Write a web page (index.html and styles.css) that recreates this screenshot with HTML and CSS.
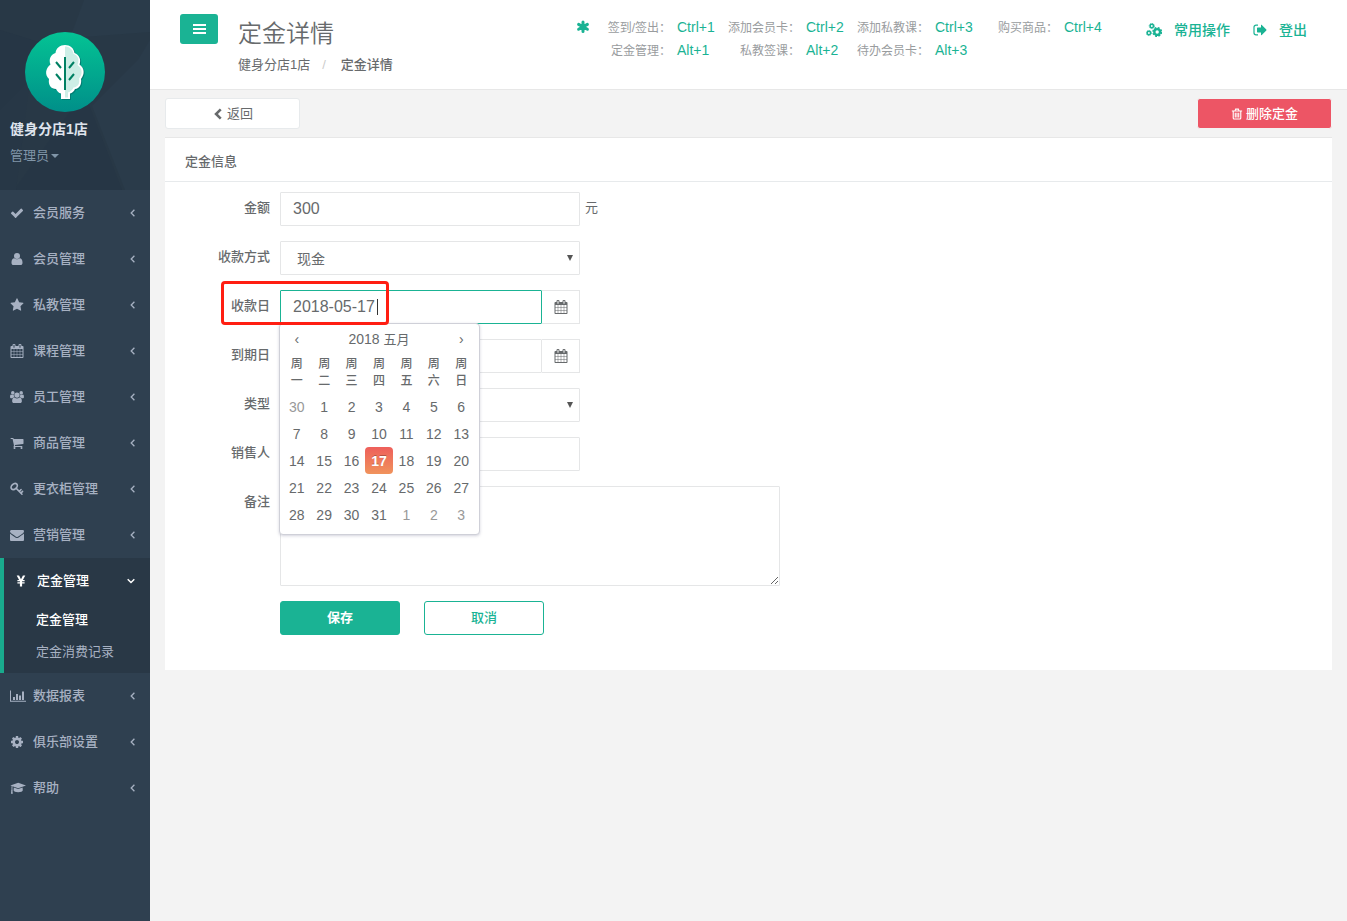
FILE: index.html
```html
<!DOCTYPE html>
<html lang="zh-CN">
<head>
<meta charset="utf-8">
<title>定金详情</title>
<link rel="stylesheet" href="styles.css">
</head>
<body>
<svg class="sprite" aria-hidden="true">
  <symbol id="check" viewBox="0 0 1792 1792"><path d="M1671 566q0 40-28 68l-724 724-136 136q-28 28-68 28t-68-28l-136-136-362-362q-28-28-28-68t28-68l136-136q28-28 68-28t68 28l294 295 656-657q28-28 68-28t68 28l136 136q28 28 28 68z"/></symbol>
  <symbol id="user" viewBox="0 0 14 14"><circle cx="7" cy="4" r="3"/><path d="M1.500 10.500C1.500 8 2.500 6.200 4.300 6.200c.8.700 1.700 1.100 2.700 1.100s1.900-.4 2.700-1.100c1.800 0 2.800 1.800 2.800 4.300v.4c0 1.200-.8 2.100-2 2.100h-7c-1.200 0-2-.9-2-2.100z"/></symbol>
  <symbol id="star" viewBox="0 0 1792 1792"><path d="M1728 647q0 22-26 48l-363 354 86 500q1 7 1 20 0 21-10.500 35.500t-30.500 14.500q-19 0-40-12l-449-236-449 236q-22 12-40 12-21 0-31.500-14.500t-10.500-35.500q0-6 2-20l86-500-364-354q-25-27-25-48 0-37 56-46l502-73 225-455q19-41 49-41t49 41l225 455 502 73q56 9 56 46z"/></symbol>
  <symbol id="calendar" viewBox="0 0 1792 1792"><path d="M192 1664h288v-288h-288v288zm352 0h320v-288h-320v288zm-352-352h288v-320h-288v320zm352 0h320v-320h-320v320zm-352-384h288v-288h-288v288zm736 736h320v-288h-320v288zm-384-736h320v-288h-320v288zm768 736h288v-288h-288v288zm-384-352h320v-320h-320v320zm-352-864v-288q0-13-9.500-22.500t-22.500-9.500h-64q-13 0-22.500 9.500t-9.500 22.500v288q0 13 9.500 22.500t22.500 9.500h64q13 0 22.500-9.500t9.500-22.500zm736 864h288v-320h-288v320zm-384-384h320v-288h-320v288zm384 0h288v-288h-288v288zm32-480v-288q0-13-9.500-22.500t-22.500-9.500h-64q-13 0-22.500 9.500t-9.500 22.500v288q0 13 9.500 22.500t22.500 9.500h64q13 0 22.500-9.500t9.500-22.500zm384-64v1280q0 52-38 90t-90 38h-1408q-52 0-90-38t-38-90v-1280q0-52 38-90t90-38h128v-96q0-66 47-113t113-47h64q66 0 113 47t47 113v96h384v-96q0-66 47-113t113-47h64q66 0 113 47t47 113v96h128q52 0 90 38t38 90z"/></symbol>
  <symbol id="users" viewBox="0 0 15 14"><circle cx="3" cy="2.600" r="1.900"/><circle cx="12" cy="2.600" r="1.900"/><path d="M.1 7.300C0 5.500.3 4.300 1.200 4.300c.5.500 1.900.8 2.900.4C4 6 4.400 6.700 4.900 7.300c-1 0-1.900.4-2.500 1H1.600C.6 8.300.1 8 .1 7.300zM14.900 7.300c.1-1.800-.2-3-1.100-3-.5.500-1.900.8-2.900.4.1 1.300-.3 2-.8 2.600 1 0 1.900.4 2.500 1h.8c1 0 1.500-.3 1.500-1z"/><circle cx="7.500" cy="4.900" r="2.800"/><path d="M2.300 11.600c0-2.100.5-4 2.300-4 .5 0 1.300.9 2.900.9s2.400-.9 2.900-.9c1.800 0 2.300 1.900 2.300 4 0 1.300-.8 1.900-1.800 1.900H4.100c-1 0-1.800-.6-1.800-1.900z"/></symbol>
  <symbol id="cart" viewBox="0 0 1792 1792"><path d="M704 1536q0 52-38 90t-90 38-90-38-38-90 38-90 90-38 90 38 38 90zm896 0q0 52-38 90t-90 38-90-38-38-90 38-90 90-38 90 38 38 90zm128-1088v512q0 24-16.500 42.500t-40.500 21.500l-1044 122q13 60 13 70 0 16-24 64h920q26 0 45 19t19 45-19 45-45 19h-1024q-26 0-45-19t-19-45q0-11 8-31.500t16-36 21.500-40 15.500-29.500l-177-823h-204q-26 0-45-19t-19-45 19-45 45-19h256q16 0 28.500 6.500t19.500 15.500 13 24.500 8 26 5.500 29.500 4.500 26h1201q26 0 45 19t19 45z"/></symbol>
  <symbol id="key" viewBox="0 0 14 14"><g fill="none" stroke="currentColor" stroke-linecap="round"><ellipse cx="4.200" cy="4.500" rx="2.500" ry="3.500" transform="rotate(48 4.200 4.500)" stroke-width="1.700"/><path stroke-width="1.500" d="M6.500 6.600 12 12.200M9.200 9.400l1.900-1.900M10.900 11.100l1.700-1.700"/></g></symbol>
  <symbol id="mail" viewBox="0 0 1792 1792"><path d="M1792 710v794q0 66-47 113t-113 47h-1472q-66 0-113-47t-47-113v-794q44 49 101 87 362 246 497 345 57 42 92.500 65.500t94.500 48 110 24.500h2q51 0 110-24.500t94.500-48 92.500-65.500q170-123 498-345 57-39 100-87zm0-294q0 79-49 151t-122 123q-376 261-468 325-10 7-42.500 31t-54 38.500-52 32.500-57.500 27-50 9h-2q-23 0-50-9t-57.500-27-52-32.500-54-38.500-42.500-31q-91-64-262-182.500t-205-142.500q-62-42-117-115.500t-55-136.500q0-78 41.500-130t118.500-52h1472q65 0 112.500 47t47.500 113z"/></symbol>
  <symbol id="yen" viewBox="0 0 14 14"><path d="M2.700 1.500h2.400L7 5.200l1.900-3.700h2.400L8.900 6h1.700v1.200H8.100v1h2.500v1.200H8.100v3.100H5.900V9.400H3.400V8.200h2.500v-1H3.400V6h1.700z"/></symbol>
  <symbol id="chart" viewBox="0 0 16 14"><path d="M0 1.500h1v10.300h15v1H0zM3 8h2v3H3zM6 5h2v6H6zM9 6.500h2V11H9zM12 2.500h2V11h-2z"/></symbol>
  <symbol id="cog" viewBox="0 0 1792 1792"><path d="M1152 896q0-106-75-181t-181-75-181 75-75 181 75 181 181 75 181-75 75-181zm512-109v222q0 12-8 23t-20 13l-185 28q-19 54-39 91 35 50 107 138 10 12 10 25t-9 23q-27 37-99 108t-94 71q-12 0-26-9l-138-108q-44 23-91 38-16 136-29 186-7 28-36 28h-222q-14 0-24.500-8.500t-11.500-21.500l-28-184q-49-16-90-37l-141 107q-10 9-25 9-14 0-25-11-126-114-165-168-7-10-7-23 0-12 8-23 15-21 51-66.500t54-70.500q-27-50-41-99l-183-27q-13-2-21-12.500t-8-23.500v-222q0-12 8-23t19-13l186-28q14-46 39-92-40-57-107-138-10-12-10-24 0-10 9-23 26-36 98.500-107.500t94.500-71.500q13 0 26 10l138 107q44-23 91-38 16-136 29-186 7-28 36-28h222q14 0 24.500 8.500t11.500 21.500l28 184q49 16 90 37l142-107q9-9 24-9 13 0 25 10 129 119 165 170 7 8 7 22 0 12-8 23-15 21-51 66.500t-54 70.500q26 50 41 98l183 28q13 2 21 12.500t8 23.500z"/></symbol>
  <symbol id="cap" viewBox="0 0 17 14"><path d="M8.700 1.500 17 4.400 8.700 7.300.4 4.400zM4 6.500l4.700 1.600 4.700-1.600.2 2.900c0 1.200-2.200 2.100-4.900 2.100s-4.900-.9-4.900-2.100zM1.600 5.200h1v3.600c.4.300.4.900 0 1.200L3 13H1l.4-3c-.3-.3-.3-.9.200-1.200z"/></symbol>
  <symbol id="left" viewBox="0 0 14 14"><path d="M8.400 3.800 5.200 7l3.200 3.200" fill="none" stroke="currentColor" stroke-width="1.300"/></symbol>
  <symbol id="down" viewBox="0 0 14 14"><path d="M1.700 5.300 5 8.500l3.300-3.200" fill="none" stroke="currentColor" stroke-width="1.500"/></symbol>
  <symbol id="bars" viewBox="0 0 14 14"><rect x="1" y="2" width="13" height="2"/><rect x="1" y="6" width="13" height="2"/><rect x="1" y="10" width="13" height="2"/></symbol>
  <symbol id="asterisk" viewBox="0 0 14 14"><path d="M7 2v9.600M2.600 4.400l8.800 4.900M11.400 4.400 2.600 9.300" fill="none" stroke="currentColor" stroke-width="3" stroke-linecap="round"/></symbol>
  <symbol id="cogs" viewBox="0 0 16 14"><g fill="none" stroke="currentColor"><circle cx="11.200" cy="9" r="2.900" stroke-width="2.400"/><circle cx="11.200" cy="9" r="4.300" stroke-width="1.400" stroke-dasharray="1.930 1.450"/><circle cx="5.800" cy="3" r="1.700" stroke-width="1.500"/><circle cx="5.800" cy="3" r="2.600" stroke-width=".8" stroke-dasharray="1.200 .84"/><circle cx="2.900" cy="10" r="1.700" stroke-width="1.500"/><circle cx="2.900" cy="10" r="2.600" stroke-width=".8" stroke-dasharray="1.200 .84"/></g></symbol>
  <symbol id="signout" viewBox="0 0 14 14"><path d="M5 2.200H3a2 2 0 0 0-2 2v5.600a2 2 0 0 0 2 2h2" fill="none" stroke="currentColor" stroke-width="1.200"/><path d="M8 2.300c0-.5.400-.6.800-.3L13.300 6.500c.3.300.3.700 0 1L8.800 12c-.4.300-.8.200-.8-.3V9.400H4.600c-.4 0-.6-.2-.6-.6V5.200c0-.4.200-.6.600-.6H8z"/></symbol>
  <symbol id="trash" viewBox="0 0 14 14"><path d="M1 3.500h12M4.700 3.300l.7-2h3.200l.7 2M2.600 3.700v8c0 .7.400 1.100 1.100 1.100h6.600c.7 0 1.100-.4 1.100-1.100v-8M5 5.500V11M7 5.500V11M9 5.500V11" fill="none" stroke="currentColor" stroke-width="1.300"/></symbol>
  <symbol id="back" viewBox="0 0 14 14"><path d="M10.200 1.500 4.700 7l5.500 5.500" fill="none" stroke="currentColor" stroke-width="3"/></symbol>
</svg>

<div class="app">
  <nav class="sidebar">
    <div class="profile">
      <svg class="facets" viewBox="0 0 150 190" preserveAspectRatio="none" aria-hidden="true">
        <path fill="#2a3b4a" d="M84 0h66v32L70 38z"/><path fill="#263645" d="M0 30 72 52 0 110zM84 92l38 98H14z"/><path fill="#2a3b4a" d="m138 60 12-20v150h-25L92 106z"/><path fill="#273746" d="m0 110 30-30-14 110H0z"/>
      </svg>
      <svg class="avatar" viewBox="0 0 80 80" role="img" aria-label="健身分店1店">
        <defs><linearGradient id="teal" x2="0" y2="1"><stop stop-color="#04c394"/><stop offset="1" stop-color="#008f89"/></linearGradient>
        <clipPath id="half"><path d="M40 0h40v80H40z"/></clipPath></defs>
        <circle cx="40" cy="40" r="40" fill="url(#teal)"/>
        <path fill="#007d73" transform="translate(1 1)" d="M40 13c-5 0-9 3-9.500 8-5 1.500-7 6.500-5 11.500-5 4-6 10-1.500 14.500-1 6 2 10 7 10 1.500 2.500 2.500 4 5 4.500V67h9v-5.500c2-.5 4-2 5-4.500 4.500-.5 7-5 6-10 4-5 3.500-11-1.500-14.500 2-5-.5-10-5-11.500C49 16 45 13 40 13z"/>
        <path fill="#fff" d="M40 13c-5 0-9 3-9.500 8-5 1.500-7 6.500-5 11.500-5 4-6 10-1.500 14.500-1 6 2 10 7 10 1.500 2.500 2.500 4 5 4.500V67h9v-5.500c2-.5 4-2 5-4.500 4.500-.5 7-5 6-10 4-5 3.500-11-1.500-14.500 2-5-.5-10-5-11.500C49 16 45 13 40 13z"/>
        <path fill="#cdeee6" clip-path="url(#half)" d="M40 14.500c4 0 8 2.500 8.500 7.500 4 1 6.500 5.500 4 11 5 3.500 5.500 9 1.500 13.500 1 5-1 8.500-5.500 9-1 2.500-3 4-5.500 5v5h-3z"/>
        <path d="M40 25v33M31 30l5 6M49 30l-5 6M31 42l5 6M49 42l-5 6" fill="none" stroke="#008063" stroke-width="2"/>
      </svg>
      <strong class="profile-name">健身分店1店</strong>
      <button class="profile-role" type="button">管理员<span class="caret-down"></span></button>
    </div>
    <ul class="menu">
      <li><a class="item" href="#"><svg class="icon"><use href="#check"/></svg><span>会员服务</span><svg class="arrow"><use href="#left"/></svg></a></li>
      <li><a class="item" href="#"><svg class="icon"><use href="#user"/></svg><span>会员管理</span><svg class="arrow"><use href="#left"/></svg></a></li>
      <li><a class="item" href="#"><svg class="icon"><use href="#star"/></svg><span>私教管理</span><svg class="arrow"><use href="#left"/></svg></a></li>
      <li><a class="item" href="#"><svg class="icon"><use href="#calendar"/></svg><span>课程管理</span><svg class="arrow"><use href="#left"/></svg></a></li>
      <li><a class="item" href="#"><svg class="icon"><use href="#users"/></svg><span>员工管理</span><svg class="arrow"><use href="#left"/></svg></a></li>
      <li><a class="item" href="#"><svg class="icon"><use href="#cart"/></svg><span>商品管理</span><svg class="arrow"><use href="#left"/></svg></a></li>
      <li><a class="item" href="#"><svg class="icon"><use href="#key"/></svg><span>更衣柜管理</span><svg class="arrow"><use href="#left"/></svg></a></li>
      <li><a class="item" href="#"><svg class="icon"><use href="#mail"/></svg><span>营销管理</span><svg class="arrow"><use href="#left"/></svg></a></li>
      <li class="active"><a class="item" href="#"><svg class="icon"><use href="#yen"/></svg><span>定金管理</span><svg class="arrow"><use href="#down"/></svg></a>
        <ul class="submenu">
          <li><a class="subitem current" href="#">定金管理</a></li>
          <li><a class="subitem" href="#">定金消费记录</a></li>
        </ul>
      </li>
      <li><a class="item" href="#"><svg class="icon wide"><use href="#chart"/></svg><span>数据报表</span><svg class="arrow"><use href="#left"/></svg></a></li>
      <li><a class="item" href="#"><svg class="icon"><use href="#cog"/></svg><span>俱乐部设置</span><svg class="arrow"><use href="#left"/></svg></a></li>
      <li><a class="item" href="#"><svg class="icon wide"><use href="#cap"/></svg><span>帮助</span><svg class="arrow"><use href="#left"/></svg></a></li>
    </ul>
  </nav>

  <div class="page">
    <header class="topbar">
      <button class="toggle" type="button" aria-label="菜单"><svg class="icon"><use href="#bars"/></svg></button>
      <div class="heading">
        <h1 class="title">定金详情</h1>
        <div class="crumbs"><a href="#">健身分店1店</a><span class="slash">/</span><strong>定金详情</strong></div>
      </div>
      <div class="shortcuts">
        <svg class="icon"><use href="#asterisk"/></svg>
        <dl class="keys">
          <div class="key"><dt>签到/签出：</dt><dd>Ctrl+1</dd></div>
          <div class="key"><dt>添加会员卡：</dt><dd>Ctrl+2</dd></div>
          <div class="key"><dt>添加私教课：</dt><dd>Ctrl+3</dd></div>
          <div class="key"><dt>购买商品：</dt><dd>Ctrl+4</dd></div>
          <div class="key"><dt>定金管理：</dt><dd>Alt+1</dd></div>
          <div class="key"><dt>私教签课：</dt><dd>Alt+2</dd></div>
          <div class="key"><dt>待办会员卡：</dt><dd>Alt+3</dd></div>
        </dl>
      </div>
      <div class="links">
        <a class="link" href="#"><svg class="icon big"><use href="#cogs"/></svg>常用操作</a>
        <a class="link" href="#"><svg class="icon"><use href="#signout"/></svg>登出</a>
      </div>
    </header>

    <main class="content">
      <div class="actions">
        <button class="btn back" type="button"><svg class="icon"><use href="#back"/></svg>返回</button>
        <button class="btn danger" type="button"><svg class="icon"><use href="#trash"/></svg>删除定金</button>
      </div>
      <section class="panel">
        <h2 class="panel-title">定金信息</h2>
        <form class="form">
          <div class="row"><label class="label" for="amount">金额</label><input class="control" id="amount" value="300"><span class="unit">元</span></div>
          <div class="row"><label class="label" for="method">收款方式</label><div class="select"><select class="control" id="method"><option>现金</option></select></div></div>
          <div class="row marked">
            <label class="label" for="paid">收款日</label>
            <div class="date">
              <input class="control focused" id="paid" value="2018-05-17"><span class="text-caret"></span>
              <button class="addon" type="button" aria-label="选择收款日"><svg class="icon"><use href="#calendar"/></svg></button>
              <div class="picker">
                <table class="days">
                  <thead>
                    <tr class="month"><th><button class="nav" type="button">‹</button></th><th colspan="5">2018 <span class="cn">五月</span></th><th><button class="nav" type="button">›</button></th></tr>
                    <tr class="week"><th>周<br>一</th><th>周<br>二</th><th>周<br>三</th><th>周<br>四</th><th>周<br>五</th><th>周<br>六</th><th>周<br>日</th></tr>
                  </thead>
                  <tbody>
                    <tr><td class="other">30</td><td>1</td><td>2</td><td>3</td><td>4</td><td>5</td><td>6</td></tr>
                    <tr><td>7</td><td>8</td><td>9</td><td>10</td><td>11</td><td>12</td><td>13</td></tr>
                    <tr><td>14</td><td>15</td><td>16</td><td class="chosen">17</td><td>18</td><td>19</td><td>20</td></tr>
                    <tr><td>21</td><td>22</td><td>23</td><td>24</td><td>25</td><td>26</td><td>27</td></tr>
                    <tr><td>28</td><td>29</td><td>30</td><td>31</td><td class="other">1</td><td class="other">2</td><td class="other">3</td></tr>
                  </tbody>
                </table>
              </div>
            </div>
            <div class="marker"></div>
          </div>
          <div class="row"><label class="label" for="due">到期日</label><div class="date"><input class="control" id="due"><button class="addon" type="button" aria-label="选择到期日"><svg class="icon"><use href="#calendar"/></svg></button></div></div>
          <div class="row"><label class="label" for="kind">类型</label><div class="select"><select class="control" id="kind"><option></option></select></div></div>
          <div class="row"><label class="label" for="seller">销售人</label><input class="control" id="seller"></div>
          <div class="row"><label class="label" for="note">备注</label><textarea class="control note" id="note"></textarea></div>
          <div class="row buttons"><button class="btn save" type="button">保存</button><button class="btn cancel" type="button">取消</button></div>
        </form>
      </section>
    </main>
  </div>
</div>
</body>
</html>
```

FILE: styles.css
```css
* { box-sizing: border-box; }

body {
  margin: 0;
  color: #676a6c;
  background: #f3f3f3;
  font: 13px/18px "Liberation Sans", "Noto Sans CJK SC", sans-serif;
}

button, input, select, textarea { font: inherit; color: inherit; margin: 0; }
button { padding: 0; border: 0; background: none; cursor: pointer; }
a { color: inherit; text-decoration: none; }
ul, dl, dd { margin: 0; padding: 0; list-style: none; }

.sprite { position: absolute; width: 0; height: 0; }
.icon { width: 14px; height: 14px; flex: none; fill: currentColor; }

.app { display: flex; min-height: 100vh; }

/* Sidebar */
.sidebar { width: 150px; flex: none; background: #2f4050; color: #a7b1c2; }
.profile {
  position: relative;
  display: flex;
  flex-direction: column;
  align-items: flex-start;
  height: 190px;
  padding: 32px 10px 0;
  background: #283846;
}
.facets { position: absolute; inset: 0; width: 100%; height: 100%; }
.avatar { position: relative; width: 80px; height: 80px; margin-left: 15px; }
.profile-name { position: relative; margin-top: 6px; font-size: 14px; line-height: 22px; color: #dfe4ed; }
.profile-role { position: relative; display: flex; align-items: center; gap: 2px; margin-top: 7px; color: #8095a8; }
.caret-down { border: 4px solid transparent; border-top-color: currentColor; border-bottom: 0; }

.item { display: flex; align-items: center; gap: 10px; height: 46px; padding: 0 10px; font-weight: 500; }
.item .icon { margin-right: -1px; }
.item .icon.wide { width: 16px; margin-right: -3px; }
.arrow { width: 14px; height: 14px; margin-left: auto; }
.active { border-left: 4px solid #19aa8d; background: #293846; color: #fff; padding-bottom: 5px; }
.subitem { display: block; padding: 7px 0 7px 32px; color: #a7b1c2; }
.subitem.current { color: #fff; font-weight: 500; }

/* Top bar */
.page { flex: 1; min-width: 0; }
.topbar { display: flex; align-items: flex-start; height: 90px; padding: 0 40px 0 30px; background: #fff; border-bottom: 1px solid #e7e7e7; }
.toggle { display: flex; align-items: center; justify-content: center; width: 38px; height: 30px; margin-top: 14px; border-radius: 3px; background: #1ab394; color: #fff; }
.heading { margin: 19px 0 0 20px; }
.title { margin: 0; font-size: 24px; line-height: 30px; font-weight: 350; }
.crumbs { margin-top: 7px; }
.crumbs strong { font-weight: 500; }
.slash { padding: 0 15px 0 12px; color: #ccc; }
.shortcuts { display: flex; gap: 2px; margin: 17px 0 0 auto; color: #1ab394; }
.shortcuts > .icon { margin-top: 3px; }
.keys { display: grid; grid-template-columns: repeat(4, 129px); row-gap: 2px; }
.key { display: grid; grid-template-columns: 79px 1fr; column-gap: 6px; line-height: 20px; }
.key dt { padding-top: 1px; font-size: 12px; text-align: right; color: #999c9e; white-space: nowrap; }
.key dd { font-size: 14px; }
.links { display: flex; gap: 23px; margin: 20px 0 0 38px; color: #1ab394; }
.link { display: flex; align-items: center; gap: 12px; font-size: 14px; line-height: 20px; font-weight: 500; white-space: nowrap; }
.icon.big { width: 16px; }

/* Content */
.content { padding: 8px 15px; }
.actions { display: flex; justify-content: space-between; }
.btn { display: flex; align-items: center; justify-content: center; gap: 3px; border-radius: 3px; }
.actions .icon { width: 12px; height: 12px; }
.back { width: 135px; height: 31px; border: 1px solid #e7eaec; background: #fff; }
.danger { width: 135px; height: 31px; border: 1px solid #f3f3f3; background: #ed5565; color: #fff; font-weight: 500; }

.panel { margin-top: 8px; background: #fff; border-top: 1px solid #e7e7e7; }
.panel-title { margin: 0; padding: 15px 20px 10px; font-size: 13px; line-height: 18px; font-weight: 500; border-bottom: 1px solid #e7eaec; }
.form { display: grid; gap: 15px; padding: 10px 20px 35px; }
.row { position: relative; display: flex; align-items: flex-start; gap: 10px; }
.label { width: 85px; padding-top: 7px; text-align: right; font-weight: 500; }
.unit { margin-left: -5px; padding-top: 7px; }
.control { display: block; width: 300px; height: 34px; padding: 0 12px; border: 1px solid #e5e6e7; border-radius: 1px; background: #fff; font-size: 16px; outline: 0; }
.select { position: relative; width: 300px; }
.select .control { appearance: none; padding: 1px 16px 0; font-size: 14px; }
.select::after { content: ""; position: absolute; right: 7px; top: 14px; border: 3px solid transparent; border-top: 6px solid #555; border-bottom: 0; pointer-events: none; }
.date { position: relative; display: flex; width: 300px; }
.date .control { width: 262px; }
.control.focused { border-color: #1ab394; }
.text-caret { position: absolute; left: 97px; top: 9px; width: 1px; height: 16px; background: #333; }
.addon { display: flex; align-items: center; justify-content: center; width: 38px; height: 34px; border: 1px solid #e5e6e7; border-left: 0; background: #fff; }
.control.note { width: 500px; height: 100px; padding: 6px 12px; resize: both; }
.buttons { gap: 24px; padding-left: 95px; }
.save, .cancel { width: 120px; height: 34px; font-weight: 500; border: 1px solid #1ab394; }
.save { background: #1ab394; color: #fff; font-weight: 700; }
.cancel { background: #fff; color: #1ab394; }

.marker { position: absolute; left: 36px; top: -9px; width: 168px; height: 44px; border: 3px solid #ff1e12; border-radius: 4px; pointer-events: none; z-index: 3; }

/* Date picker */
.picker { position: absolute; z-index: 2; left: -1px; top: 33px; width: 201px; padding: 4px 4px 6px 3px; border: 1px solid #cfd0d8; border-radius: 4px; background: #fff; box-shadow: 0 1px 3px rgba(80, 80, 120, .25); }
.days { width: 100%; border-collapse: collapse; table-layout: fixed; text-align: center; font-size: 14px; }
.days th, .days td { padding: 0; font-weight: 400; }
.month { height: 22px; }
.cn { font-size: 13px; }
.nav { width: 100%; }
.week { height: 43px; font-size: 12px; line-height: 17px; }
.days .week th { padding-top: 2px; font-weight: 500; }
.days td { height: 27px; }
.days .other { color: #999; }
.days .chosen { border-radius: 4px; background: linear-gradient(#ee5f5b, #f0935c); background-clip: padding-box; color: #fff; font-weight: 700; text-shadow: 0 -1px 0 rgba(0, 0, 0, .25); }
```
